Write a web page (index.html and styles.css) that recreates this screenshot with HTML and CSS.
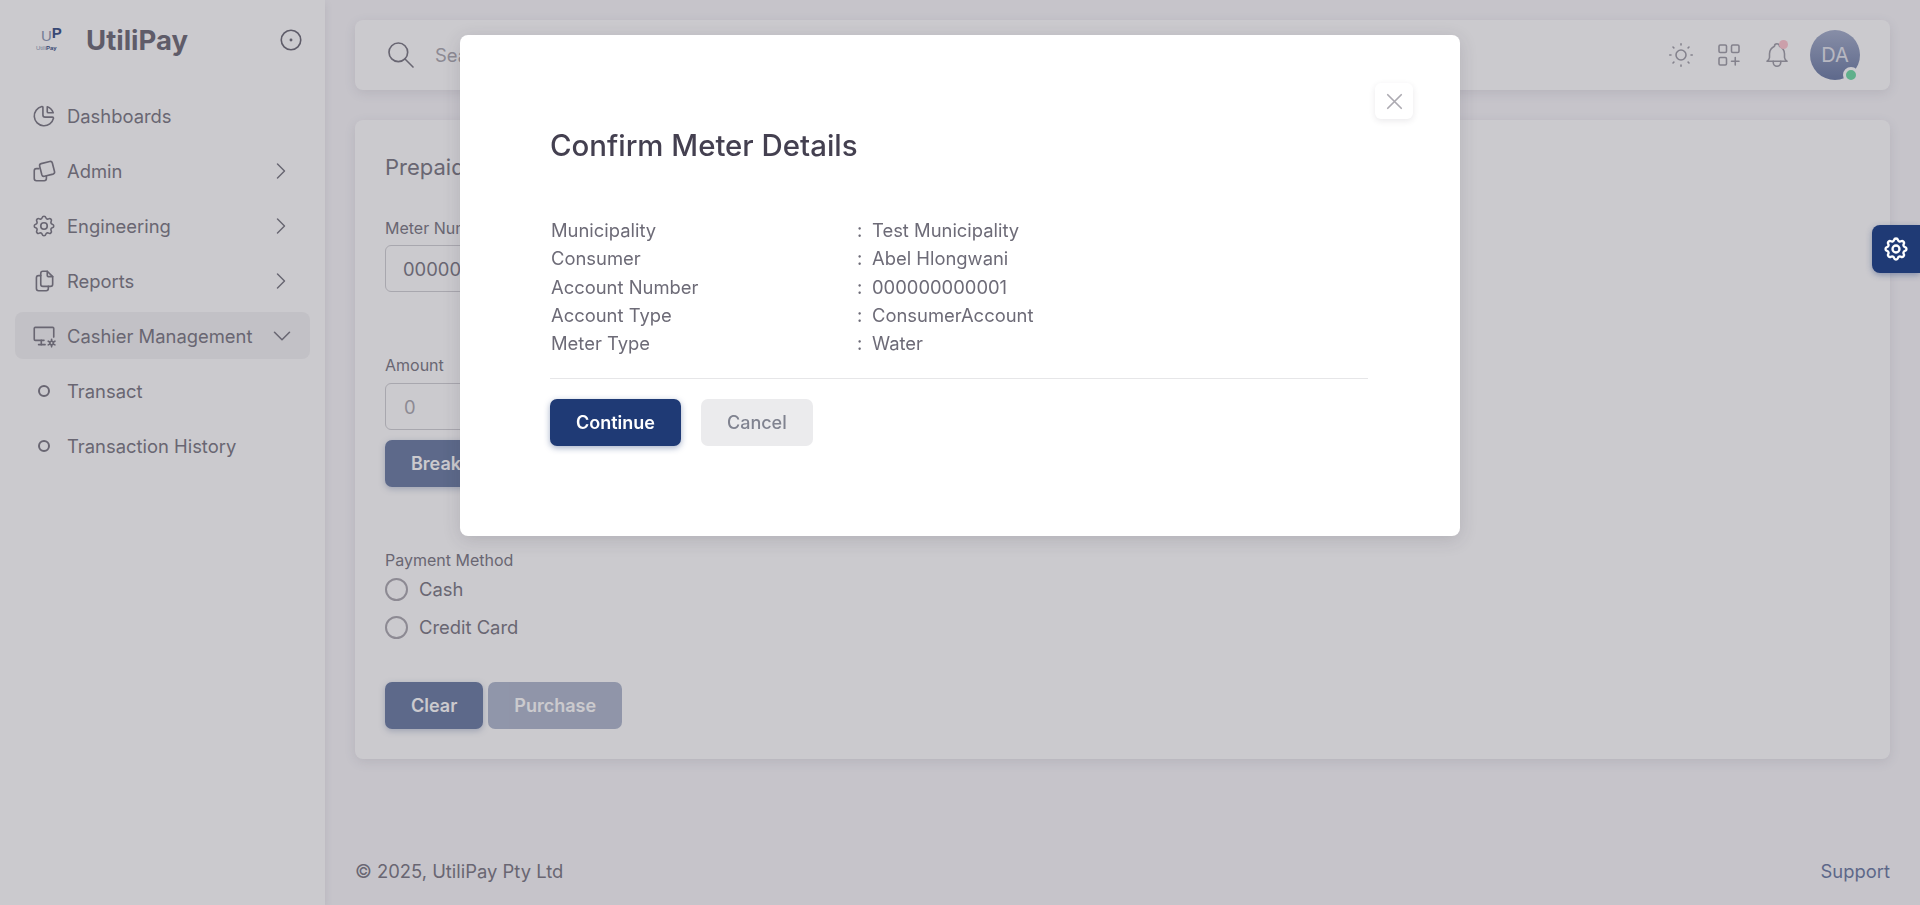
FILE: index.html
```html
<!DOCTYPE html>
<html lang="en">
<head>
  <meta charset="UTF-8" />
  <meta name="viewport" content="width=device-width, initial-scale=1.0" />
  <title>Transact - UtiliPay</title>
  <link rel="stylesheet" href="styles.css">
</head>
<body>

  <svg class="sprite" xmlns="http://www.w3.org/2000/svg">
    <symbol id="i-pie" viewBox="0 0 24 24"><path d="M10 3.2a9 9 0 1 0 10.8 10.8a1 1 0 0 0 -1 -1h-6.8a2 2 0 0 1 -2 -2v-7a.9 .9 0 0 0 -1 -.8"/><path d="M15 3.5a9 9 0 0 1 5.5 5.5h-4.5a1 1 0 0 1 -1 -1v-4.5"/></symbol>
    <symbol id="i-squares" viewBox="0 0 24 24"><path d="M9.4 5.2l7.9 -2a2 2 0 0 1 2.4 1.4l2 7.9a2 2 0 0 1 -1.4 2.4l-7.9 2a2 2 0 0 1 -2.4 -1.4l-2 -7.9a2 2 0 0 1 1.4 -2.4z"/><path d="M7.3 9.8h-2.3a2 2 0 0 0 -2 2v7.2a2 2 0 0 0 2 2h7.2a2 2 0 0 0 2 -2v-2.4"/></symbol>
    <symbol id="i-gear" viewBox="0 0 24 24"><path d="M10.325 4.317c.426 -1.756 2.924 -1.756 3.35 0a1.724 1.724 0 0 0 2.573 1.066c1.543 -.94 3.31 .826 2.37 2.37a1.724 1.724 0 0 0 1.065 2.572c1.756 .426 1.756 2.924 0 3.35a1.724 1.724 0 0 0 -1.066 2.573c.94 1.543 -.826 3.31 -2.37 2.37a1.724 1.724 0 0 0 -2.572 1.065c-.426 1.756 -2.924 1.756 -3.35 0a1.724 1.724 0 0 0 -2.573 -1.066c-1.543 .94 -3.31 -.826 -2.37 -2.37a1.724 1.724 0 0 0 -1.065 -2.572c-1.756 -.426 -1.756 -2.924 0 -3.35a1.724 1.724 0 0 0 1.066 -2.573c-.94 -1.543 .826 -3.31 2.37 -2.37c1 .608 2.296 .07 2.572 -1.065z"/><circle cx="12" cy="12" r="3"/></symbol>
    <symbol id="i-files" viewBox="0 0 24 24"><path d="M15 3v4a1 1 0 0 0 1 1h4"/><path d="M18 17h-7a2 2 0 0 1 -2 -2v-10a2 2 0 0 1 2 -2h4l5 5v7a2 2 0 0 1 -2 2z"/><path d="M16 17v2a2 2 0 0 1 -2 2h-7a2 2 0 0 1 -2 -2v-10a2 2 0 0 1 2 -2h2"/></symbol>
    <symbol id="i-desktop-cog" viewBox="0 0 24 24"><path d="M12 16h-8a1 1 0 0 1 -1 -1v-10a1 1 0 0 1 1 -1h16a1 1 0 0 1 1 1v8"/><path d="M7 20h6"/><path d="M9.5 16v4"/><circle cx="19" cy="18.5" r="1.6"/><path d="M19 15v1.4M19 20.6v1.4M15.9 16.8l1.3 .7M20.8 19.5l1.3 .7M15.9 20.2l1.3 -.7M20.8 17.5l1.3 -.7"/></symbol>
    <symbol id="i-chevron-right" viewBox="0 0 24 24"><path d="M9 6l6 6l-6 6"/></symbol>
    <symbol id="i-chevron-down" viewBox="0 0 24 24"><path d="M6 9l6 6l6 -6"/></symbol>
    <symbol id="i-target" viewBox="0 0 24 24"><circle cx="12" cy="12" r="9"/><circle cx="12" cy="12" r=".6"/></symbol>
    <symbol id="i-search" viewBox="0 0 24 24"><circle cx="10" cy="10" r="7"/><path d="M21 21l-6 -6"/></symbol>
    <symbol id="i-sun" viewBox="0 0 24 24"><circle cx="12" cy="12" r="4"/><path d="M3 12h1M20 12h1M12 3v1M12 20v1M5.6 5.6l.7 .7M17.7 17.7l.7 .7M5.6 18.4l.7 -.7M17.7 6.3l.7 -.7"/></symbol>
    <symbol id="i-apps" viewBox="0 0 24 24"><rect x="4" y="4" width="6" height="6" rx="1"/><rect x="14" y="4" width="6" height="6" rx="1"/><rect x="4" y="14" width="6" height="6" rx="1"/><path d="M14 17h6M17 14v6"/></symbol>
    <symbol id="i-bell" viewBox="0 0 24 24"><path d="M10 5a2 2 0 1 1 4 0a7 7 0 0 1 4 6v3a4 4 0 0 0 2 3h-16a4 4 0 0 0 2 -3v-3a7 7 0 0 1 4 -6"/><path d="M9 17v1a3 3 0 0 0 6 0v-1"/></symbol>
    <symbol id="i-x" viewBox="0 0 24 24"><path d="M18 6l-12 12M6 6l12 12"/></symbol>
  </svg>

  <div class="app">
    <aside class="sidebar">
      <div class="brand">
        <div class="logo">
          <span class="logo-mark"><span class="logo-u">U</span><span class="logo-p">P</span></span>
          <span class="logo-name">Utili<b>Pay</b></span>
        </div>
        <span class="brand-name">UtiliPay</span>
        <svg class="icon brand-toggle"><use href="#i-target"/></svg>
      </div>

      <nav class="menu">
        <a class="menu-item"><svg class="icon"><use href="#i-pie"/></svg><span>Dashboards</span></a>
        <a class="menu-item"><svg class="icon"><use href="#i-squares"/></svg><span>Admin</span><svg class="icon chevron"><use href="#i-chevron-right"/></svg></a>
        <a class="menu-item"><svg class="icon"><use href="#i-gear"/></svg><span>Engineering</span><svg class="icon chevron"><use href="#i-chevron-right"/></svg></a>
        <a class="menu-item"><svg class="icon"><use href="#i-files"/></svg><span>Reports</span><svg class="icon chevron"><use href="#i-chevron-right"/></svg></a>
        <a class="menu-item open"><svg class="icon"><use href="#i-desktop-cog"/></svg><span>Cashier Management</span><svg class="icon chevron"><use href="#i-chevron-down"/></svg></a>
        <a class="menu-item sub"><i class="dot"></i><span>Transact</span></a>
        <a class="menu-item sub"><i class="dot"></i><span>Transaction History</span></a>
      </nav>
    </aside>

    <div class="main">
      <header class="topbar">
        <svg class="icon search-icon"><use href="#i-search"/></svg>
        <span class="search-text">Search</span>
        <div class="top-actions">
          <svg class="icon"><use href="#i-sun"/></svg>
          <svg class="icon"><use href="#i-apps"/></svg>
          <span class="bell"><svg class="icon"><use href="#i-bell"/></svg><i class="bell-dot"></i></span>
          <span class="avatar">DA<i class="online"></i></span>
        </div>
      </header>

      <section class="card">
        <h5 class="card-title">Prepaid Purchase</h5>

        <label class="field-label">Meter Number</label>
        <div class="input">000000000001</div>

        <label class="field-label amount-label">Amount</label>
        <div class="input placeholder">0</div>
        <button class="btn btn-primary btn-faded break-btn">Breakdown</button>

        <label class="field-label payment-label">Payment Method</label>
        <div class="radio"><i></i>Cash</div>
        <div class="radio"><i></i>Credit Card</div>

        <div class="card-actions">
          <button class="btn btn-primary btn-faded">Clear</button>
          <button class="btn btn-primary btn-disabled">Purchase</button>
        </div>
      </section>

      <footer class="footer">
        <span>© 2025, UtiliPay Pty Ltd</span>
        <a class="support">Support</a>
      </footer>
    </div>
  </div>

  <div class="overlay">
    <div class="modal">
      <button class="modal-close"><svg class="icon"><use href="#i-x"/></svg></button>
      <h4 class="modal-title">Confirm Meter Details</h4>

      <div class="details">
        <span>Municipality</span><span>:</span><span>Test Municipality</span>
        <span>Consumer</span><span>:</span><span>Abel Hlongwani</span>
        <span>Account Number</span><span>:</span><span>000000000001</span>
        <span>Account Type</span><span>:</span><span>ConsumerAccount</span>
        <span>Meter Type</span><span>:</span><span>Water</span>
      </div>

      <hr class="divider">

      <div class="modal-actions">
        <button class="btn btn-primary">Continue</button>
        <button class="btn btn-secondary">Cancel</button>
      </div>
    </div>
  </div>

  <div class="settings-tab"><svg class="icon"><use href="#i-gear"/></svg></div>

</body>
</html>
```

FILE: styles.css
```css
* {
  box-sizing: border-box;
}
body {
  margin: 0;
  height: 905px;
  overflow: hidden;
  background: #f8f7fa;
  color: #6d6b77;
  font-family: Inter, "Noto Sans", sans-serif;
  font-size: 18.4px;
}
.sprite {
  display: none;
}
.icon {
  width: 26px;
  height: 26px;
  fill: none;
  stroke: currentColor;
  stroke-width: 1.5;
  stroke-linecap: round;
  stroke-linejoin: round;
  flex: none;
}
.app {
  display: flex;
  height: 905px;
  color: #7c7a85;
}

/* sidebar */
.sidebar {
  width: 325px;
  flex: none;
  background: #fff;
  box-shadow: 0 3px 8px rgba(47, 43, 61, 0.1);
  padding: 0 15px;
}
.brand {
  display: flex;
  align-items: center;
  height: 79px;
  padding: 0 6px 0 21px;
}
.logo {
  width: 50px;
  display: flex;
  flex-direction: column;
  line-height: 1;
}
.logo-mark {
  font-family: "Liberation Sans", sans-serif;
  font-size: 15px;
  font-weight: 700;
  height: 14px;
  line-height: 14px;
  padding-left: 5px;
}
.logo-u {
  color: #8c98b4;
  font-weight: 400;
}
.logo-p {
  color: #3a5288;
  position: relative;
  top: -3px;
}
.logo-name {
  font-family: "Liberation Sans", sans-serif;
  font-size: 6px;
  margin-top: 2px;
  color: #8c98b4;
}
.logo-name b {
  color: #3a5288;
}
.brand-name {
  font-size: 27.5px;
  font-weight: 700;
  color: #6f6d79;
  flex: 1;
}
.brand-toggle {
  color: #6f6d79;
}
.menu {
  display: flex;
  flex-direction: column;
  gap: 8px;
  margin-top: 13px;
}
.menu-item {
  display: flex;
  align-items: center;
  height: 47px;
  padding: 0 14px 0 16px;
  border-radius: 8px;
  gap: 10px;
}
.menu-item span {
  flex: 1;
}
.menu-item.open {
  background: rgba(47, 43, 61, 0.06);
}
.chevron {
  width: 28px;
  height: 28px;
  margin-right: 1px;
  stroke-width: 1.25;
}
.open .chevron {
  width: 30px;
  height: 30px;
  margin-right: -1px;
}
.dot {
  width: 12px;
  height: 12px;
  border: 2px solid currentColor;
  border-radius: 50%;
  margin: 0 7px;
}

/* main column */
.main {
  flex: 1;
  display: flex;
  flex-direction: column;
  padding: 20px 30px 0;
  min-width: 0;
}
.topbar {
  display: flex;
  align-items: center;
  height: 70px;
  background: #fff;
  border-radius: 8px;
  box-shadow: 0 3px 12px rgba(47, 43, 61, 0.1);
  padding: 0 30px 0 30px;
}
.search-icon {
  width: 32px;
  height: 32px;
  stroke-width: 1.25;
}
.search-text {
  margin-left: 18px;
  color: #acaab1;
  flex: 1;
}
.top-actions {
  display: flex;
  align-items: center;
  gap: 18px;
}
.top-actions .icon {
  width: 30px;
  height: 30px;
  color: #a09fa8;
  stroke-width: 1.25;
}
.bell {
  position: relative;
  display: flex;
}
.bell-dot {
  position: absolute;
  top: 0;
  right: 4px;
  width: 9px;
  height: 9px;
  background: #ffc6cf;
  border-radius: 50%;
}
.avatar {
  position: relative;
  width: 50px;
  height: 50px;
  border-radius: 50%;
  background: linear-gradient(#a5afcb, #6d7da6);
  color: #e4e6ee;
  display: flex;
  align-items: center;
  justify-content: center;
  font-size: 20px;
}
.online {
  position: absolute;
  right: 1px;
  bottom: -3px;
  width: 16px;
  height: 16px;
  background: #6fdca6;
  border: 3px solid #fff;
  border-radius: 50%;
}
.card {
  margin-top: 30px;
  height: 639px;
  background: #fff;
  border-radius: 8px;
  box-shadow: 0 3px 12px rgba(47, 43, 61, 0.1);
  padding: 33px 30px 0;
}
.card-title {
  margin: 0;
  font-size: 22px;
  font-weight: 400;
  line-height: 28px;
}
.field-label {
  display: block;
  font-size: 16px;
  line-height: 20px;
  margin-top: 37px;
  margin-bottom: 7px;
}
.amount-label {
  margin-top: 63px;
  margin-bottom: 8px;
}
.payment-label {
  margin-top: 63px;
  margin-bottom: 0;
}
.input {
  width: 400px;
  height: 47px;
  border: 1px solid #d1d0d4;
  border-radius: 6px;
  padding: 0 17px;
  display: flex;
  align-items: center;
}
.placeholder {
  color: #acaab1;
  padding-left: 18px;
}
.break-btn {
  display: block;
  margin-top: 10px;
}
.radio {
  display: flex;
  align-items: center;
  gap: 11px;
  height: 38px;
}
.radio i {
  width: 23px;
  height: 23px;
  border: 2px solid #acaab1;
  border-radius: 50%;
}
.card-actions {
  display: flex;
  gap: 5px;
  margin-top: 36px;
}
.btn {
  height: 47px;
  padding: 0 26px;
  border: none;
  border-radius: 7px;
  font-family: inherit;
  font-size: 18px;
  font-weight: 600;
}
.btn-primary {
  background: #1f3a75;
  color: #fff;
  box-shadow: 0 2px 6px rgba(31, 58, 117, 0.4);
}
.btn-faded {
  opacity: 0.65;
}
.btn-disabled {
  opacity: 0.35;
  box-shadow: none;
}
.btn-secondary {
  background: #ebebed;
  color: #808390;
  font-weight: 500;
}
.footer {
  margin-top: auto;
  height: 66px;
  display: flex;
  justify-content: space-between;
  padding-top: 21px;
}
.support {
  color: #1f3a75;
  opacity: 0.65;
}

/* confirm dialog */
.overlay {
  position: fixed;
  inset: 0;
  background: rgba(47, 43, 61, 0.25);
  display: flex;
  justify-content: center;
  align-items: flex-start;
  padding-top: 35px;
}
.modal {
  position: relative;
  width: 1000px;
  height: 501px;
  background: #fff;
  border-radius: 8px;
  box-shadow: 0 4px 18px rgba(47, 43, 61, 0.16);
  padding: 92px 90px 0;
}
.modal-close {
  position: absolute;
  top: 48px;
  right: 47px;
  width: 38px;
  height: 36px;
  padding: 0;
  border: none;
  border-radius: 6px;
  background: #fff;
  color: #acaab1;
  display: flex;
  align-items: center;
  justify-content: center;
  box-shadow: 0 2px 6px rgba(47, 43, 61, 0.1);
}
.modal-close .icon {
  width: 27px;
  height: 27px;
}
.modal-title {
  margin: 0;
  font-size: 29.4px;
  font-weight: 500;
  line-height: 38px;
  color: #444050;
}
.details {
  display: grid;
  grid-template-columns: 306px 15px 1fr;
  margin: 51px 0 0 1px;
  line-height: 28.3px;
}
.divider {
  border: none;
  border-top: 1px solid #e6e6e8;
  margin: 21px 0 0;
  width: 818px;
}
.modal-actions {
  display: flex;
  gap: 20px;
  margin-top: 20px;
}

.settings-tab {
  position: fixed;
  top: 225px;
  right: 0;
  width: 48px;
  height: 48px;
  background: #1f3a75;
  color: #fff;
  border-radius: 8px 0 0 8px;
  display: flex;
  align-items: center;
  justify-content: center;
  box-shadow: 0 2px 6px rgba(31, 58, 117, 0.4);
}
.settings-tab .icon {
  width: 28px;
  height: 28px;
  stroke-width: 2;
}
```
